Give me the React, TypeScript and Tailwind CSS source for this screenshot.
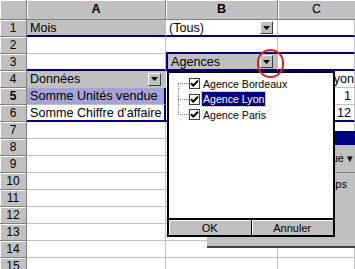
import React from 'react';

type CellProps = {
    text?: string;
    bg?: string;
    drop?: boolean;
    right?: boolean;
    className?: string;
};

function DropButton() {
    return (
        <span className="ml-auto mr-[1px] flex h-[13px] w-[13px] shrink-0 items-center justify-center border border-t-white border-l-white border-r-[#404040] border-b-[#404040] bg-[#c0c0c0]">
            <svg width="7" height="4" viewBox="0 0 7 4">
                <path d="M0 0h7L3.5 4z" fill="#000" />
            </svg>
        </span>
    );
}

function Cell({ text, bg = 'bg-white', drop, right, className = '' }: CellProps) {
    return (
        <div
            className={`flex h-[17px] items-center overflow-hidden whitespace-nowrap border-r border-b border-[#c0c0c0] px-[3px] text-[12.6px] leading-[16px] text-black ${bg} ${right ? 'justify-end' : ''} ${className}`}
        >
            {text && <span>{text}</span>}
            {drop && <DropButton />}
        </div>
    );
}

function RowHead({ n, bold }: { n: number; bold?: boolean }) {
    return (
        <div
            className={`flex h-[17px] items-center justify-center border-r border-b border-[#808080] bg-[#c0c0c0] text-[12px] shadow-[inset_1px_1px_0_#fff] ${bold ? 'font-bold' : ''}`}
        >
            {n}
        </div>
    );
}

function CheckItem({ label, active }: { label: string; active?: boolean }) {
    return (
        <div className="flex h-[15.5px] items-center">
            <span className="w-[11px] border-t border-dotted border-[#808080]" />
            <span className="flex h-[11px] w-[11px] shrink-0 items-center justify-center border border-[#404040] bg-white">
                <svg width="9" height="9" viewBox="0 0 9 9">
                    <path d="M1 4.2l2.3 2.4L8 1.8" stroke="#000" strokeWidth="2" fill="none" />
                </svg>
            </span>
            <span
                className={`ml-[2px] whitespace-nowrap px-[1px] text-[10.6px] leading-[14px] ${active ? 'bg-[#000080] text-white outline-1 outline-dotted outline-[#c0c000]' : 'text-black'}`}
            >
                {label}
            </span>
        </div>
    );
}

export default function App() {
    const navyB = 'border-b-2 border-b-[#000080]';
    const rows: React.ReactNode[] = [];
    for (let r = 7; r <= 15; r++) {
        rows.push(
            <React.Fragment key={r}>
                <RowHead n={r} />
                <Cell />
                <Cell />
                <Cell />
            </React.Fragment>,
        );
    }

    return (
        <div className="relative h-[269px] w-[355px] overflow-hidden bg-white font-['Liberation_Sans',Arial,sans-serif]">
            <div className="grid grid-cols-[27px_139px_112px_77px]">
                <div className="h-[20px] border-r border-b border-[#808080] bg-[#c0c0c0] shadow-[inset_1px_1px_0_#fff]" />
                <div className="flex h-[20px] items-center justify-center border-r border-b border-[#808080] bg-[#c0c0c0] text-[12.5px] font-bold shadow-[inset_1px_1px_0_#fff]">
                    A
                </div>
                <div className="flex h-[20px] items-center justify-center border-r border-b border-[#808080] bg-[#c0c0c0] text-[12.5px] font-bold shadow-[inset_1px_1px_0_#fff]">
                    B
                </div>
                <div className="flex h-[20px] items-center justify-center border-b border-[#808080] bg-[#c0c0c0] text-[12.5px] shadow-[inset_1px_1px_0_#fff]">
                    C
                </div>

                <RowHead n={1} />
                <Cell text="Mois" bg="bg-[#c0c0c0]" className={navyB} />
                <Cell text="(Tous)" drop className={navyB} />
                <Cell className={navyB} />

                <RowHead n={2} />
                <Cell />
                <Cell className={navyB} />
                <Cell className={navyB} />

                <RowHead n={3} />
                <Cell className={navyB} />
                <Cell text="Agences" bg="bg-[#c0c0c0]" drop className={`${navyB} border-l-2 border-l-[#000080]`} />
                <Cell className={navyB} />

                <RowHead n={4} />
                <Cell text="Données" bg="bg-[#c0c0c0]" drop />
                <Cell />
                <Cell text="Agence Lyon" />

                <RowHead n={5} bold />
                <Cell text="Somme Unités vendue" bg="bg-[#a4a4d4]" className="border-r-2 border-r-[#000080]" />
                <Cell />
                <Cell text="1" right />

                <RowHead n={6} />
                <Cell text="Somme Chiffre d'affaire" className={`${navyB} border-r-2 border-r-[#000080]`} />
                <Cell className={navyB} />
                <Cell text="12" right className={navyB} />

                {rows}
            </div>

            {/* floating pivot toolbar behind the popup */}
            <div className="absolute left-[207px] top-[131px] flex h-[117px] w-[160px] flex-col border-b-2 border-[#404040] bg-[#c0c0c0]">
                <div className="h-[14px] bg-[#000080]" />
                <div className="flex h-[28px] items-center justify-end border-b border-[#808080] pr-[14px] text-[11px]">
                    Tableau croisé dynamique ▾
                </div>
                <div className="flex h-[22px] items-center justify-end pr-[20px] text-[11px]">Champs</div>
            </div>

            {/* field dropdown */}
            <div className="absolute left-[167px] top-[71px] flex h-[166px] w-[168px] flex-col border-2 border-black bg-white text-[11px]">
                <div className="flex flex-1 flex-col pl-[9px] pt-[3px]">
                    <div className="relative flex flex-col">
                        <span className="absolute left-0 top-[8px] h-[31px] border-l border-dotted border-[#808080]" />
                        <CheckItem label="Agence Bordeaux" />
                        <CheckItem label="Agence Lyon" active />
                        <CheckItem label="Agence Paris" />
                    </div>
                </div>
                <div className="flex h-[17px] gap-[1px] border-t-2 border-black bg-black">
                    <button className="flex-1 bg-[#c0c0c0] text-[11px] leading-[14px] shadow-[inset_1px_1px_0_#fff]">OK</button>
                    <button className="flex-1 bg-[#c0c0c0] text-[11px] leading-[14px] shadow-[inset_1px_1px_0_#fff]">Annuler</button>
                </div>
            </div>

            {/* red highlight circle */}
            <div className="absolute left-[257px] top-[49px] h-[29px] w-[27px] rounded-full border-[2.5px] border-[#e41b1b]" />
        </div>
    );
}
